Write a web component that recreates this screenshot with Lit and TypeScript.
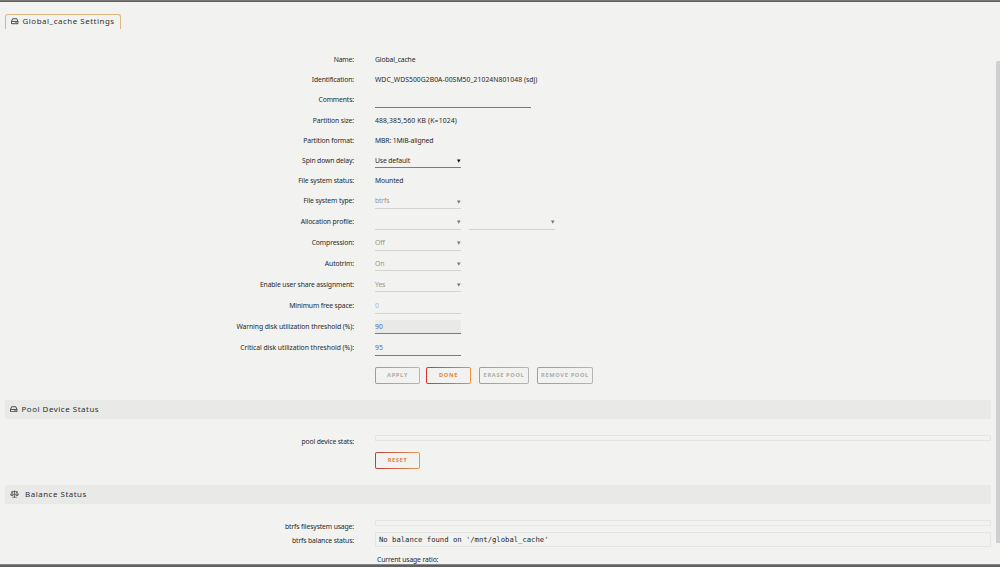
import { LitElement, html, css, svg, nothing } from "lit";
import { customElement } from "lit/decorators.js";
import { styleMap } from "lit/directives/style-map.js";

type Kind = "text" | "select" | "input" | "comment";
interface Row {
  label: string;
  value: string;
  kind: Kind;
  height: number;
  disabled?: boolean;
  focused?: boolean;
  second?: boolean;
  tone?: string;
}

const rows: Row[] = [
  { label: "Name:", value: "Global_cache", kind: "text", height: 20 },
  { label: "Identification:", value: "WDC_WDS500G2B0A-00SM50_21024N801048 (sdj)", kind: "text", height: 20, tone: "serial" },
  { label: "Comments:", value: "", kind: "comment", height: 21 },
  { label: "Partition size:", value: "488,385,560 KB (K=1024)", kind: "text", height: 20, tone: "digits" },
  { label: "Partition format:", value: "MBR: 1MiB-aligned", kind: "text", height: 20 },
  { label: "Spin down delay:", value: "Use default", kind: "select", height: 20.8 },
  { label: "File system status:", value: "Mounted", kind: "text", height: 20 },
  { label: "File system type:", value: "btrfs", kind: "select", height: 20.7, disabled: true },
  { label: "Allocation profile:", value: "", kind: "select", height: 20.7, disabled: true, second: true },
  { label: "Compression:", value: "Off", kind: "select", height: 20.8, disabled: true },
  { label: "Autotrim:", value: "On", kind: "select", height: 21, disabled: true },
  { label: "Enable user share assignment:", value: "Yes", kind: "select", height: 21.1, disabled: true },
  { label: "Minimum free space:", value: "0", kind: "input", height: 20.9, disabled: true },
  { label: "Warning disk utilization threshold (%):", value: "90", kind: "input", height: 21.5, focused: true, tone: "warning" },
  { label: "Critical disk utilization threshold (%):", value: "95", kind: "input", height: 20.5, tone: "critical" },
];

const buttons = [
  { text: "APPLY", width: 45, gap: 6 },
  { text: "DONE", width: 45, gap: 8, active: true },
  { text: "ERASE POOL", width: 50, gap: 8 },
  { text: "REMOVE POOL", width: 56, gap: 0 },
];

const driveIcon = svg`<svg class="drive" viewBox="0 0 14 12"><path d="M1 6.2 3.2 1.3h7.6L13 6.2v4.4H1zM1.2 6.4h11.6M7.6 8.5h1M10 8.5h1" fill="none" stroke="currentColor" stroke-width="1.5" stroke-linejoin="round"/></svg>`;
const scaleIcon = svg`<svg class="scale" viewBox="0 0 18 16"><path d="M9 1v13M4.5 14.5h9M3 3.2h12M4 3.5 1.2 9.5h5.6zM14 3.5l-2.8 6h5.6zM1.2 9.8c.6 2 5 2 5.6 0M11.2 9.8c.6 2 5 2 5.6 0" fill="none" stroke="currentColor" stroke-width="1.2" stroke-linejoin="round"/></svg>`;

@customElement("app-root")
export class AppRoot extends LitElement {
  static styles = css`
    :host {
      display: block;
      position: relative;
      box-sizing: border-box;
      width: 1000px;
      height: 567px;
      overflow: hidden;
      background: #f2f2f0;
      color: #25292a;
      font: 6.8px/14px "Noto Sans", "Open Sans", sans-serif;
      letter-spacing: -0.13px;
      white-space: nowrap;
    }
    * { box-sizing: border-box; }
    .topbar { height: 2px; background: #777774; border-bottom: 1px solid #60605e; }
    .bottombar { position: absolute; left: 0; right: 0; bottom: 0; height: 3px; background: #626262; border-top: 1px solid #858585; }
    .scroll { position: absolute; right: 0; top: 60.5px; width: 4px; height: 482.5px; background: #cfcfcf; border-radius: 2px 0 0 0; }
    .page { padding: 12px 9px 0 5px; }
    .tab {
      width: 115.5px;
      height: 15px;
      border: 1px solid #dcb881;
      border-bottom: 0;
      border-radius: 3px 3px 0 0;
      padding: 0 0 1px 5px;
      display: flex;
      align-items: center;
    }
    .title { font-size: 7.9px; letter-spacing: 0.54px; color: #2b3031; margin-top: -1px; }
    .drive { width: 7.5px; height: 6.5px; margin-right: 4px; flex: none; }
    .scale { width: 9px; height: 8px; margin-right: 6px; flex: none; }
    .form { margin-top: 23.7px; }
    .row { display: grid; grid-template-columns: 349px 1fr; column-gap: 21px; align-items: start; }
    .label { text-align: right; }
    .warning .label { letter-spacing: -0.08px; }
    .critical .label { letter-spacing: -0.04px; }
    .serial .text { letter-spacing: 0.05px; }
    .digits .text { letter-spacing: 0.15px; }
    .controls { display: flex; gap: 8px; }
    .control {
      width: 86px;
      height: 14.8px;
      border-bottom: 1px solid #7c7c7b;
      display: flex;
      justify-content: space-between;
      line-height: 14px;
    }
    .comment { width: 156px; height: 15px; border-bottom: 1px solid #7a7a79; }
    .arrow { width: 3.6px; height: 4px; margin-top: 5.2px; fill: #111; }
    .disabled { color: #929494; border-bottom-color: #d3d3d2; }
    .disabled .arrow { fill: #777; }
    .input { color: #486dba; letter-spacing: 0.15px; }
    .input.disabled { color: #a9b5ed; }
    .focused { background: #e9e9e8; }
    .buttons { display: flex; margin-left: 370px; height: 17px; }
    .form + .buttons { margin-top: 5.3px; }
    .button {
      height: 17px;
      padding: 1px;
      border-radius: 2px;
      background: linear-gradient(90deg, #9c9c9b, #b5b5b4);
      color: #adadab;
      font-size: 5.7px;
      font-weight: 700;
      letter-spacing: 0.64px;
      line-height: 15px;
      text-align: center;
    }
    .face { display: block; height: 100%; background: #f2f2f0; border-radius: 1px; }
    .active { background: linear-gradient(90deg, #dc2f33, #f39338); color: #e58340; }
    .reset { background: linear-gradient(90deg, #bf3b3f, #e09a54); }
    .band {
      height: 19px;
      background: #e9e9e7;
      display: flex;
      align-items: center;
      padding: 0 0 0 5px;
    }
    .pool { margin-top: 15.7px; }
    .stats { height: 33px; padding-top: 16px; }
    .output { height: 6px; border: 1px solid #e5e5e4; }
    .balance { margin-top: 16px; }
    .usage { padding-top: 16px; height: 28px; }
    .status { height: 15px; font: 7.22px/14px "DejaVu Sans Mono", monospace; letter-spacing: 0; padding-left: 3px; }
    .statusrow { height: 21px; }
    .statusrow .label { padding-top: 2px; }
    .ratio { padding: 0.6px 0 0 372px; }
  `;

  private select(value: string, disabled = false) {
    return html`<div class="control ${disabled ? "disabled" : ""}">
      <span>${value}</span>
      <svg class="arrow" viewBox="0 0 4 4"><path d="M0 .2h4L2 4z" /></svg>
    </div>`;
  }

  private control(r: Row) {
    if (r.kind === "text") return html`<span class="text">${r.value}</span>`;
    if (r.kind === "comment") return html`<div class="comment"></div>`;
    if (r.kind === "select")
      return html`${this.select(r.value, r.disabled)}${r.second ? this.select("", true) : nothing}`;
    return html`<div class="control input ${r.disabled ? "disabled" : ""} ${r.focused ? "focused" : ""}">
      <span>${r.value}</span>
    </div>`;
  }

  render() {
    return html`
      <div class="topbar"></div>
      <main class="page">
        <div class="tab">${driveIcon}<span class="title">Global_cache Settings</span></div>
        <div class="form">
          ${rows.map(
            (r) => html`<div class="row ${r.tone ?? ""}" style=${styleMap({ height: `${r.height}px` })}>
              <span class="label">${r.label}</span>
              <div class="controls">${this.control(r)}</div>
            </div>`
          )}
        </div>
        <div class="buttons">
          ${buttons.map(
            (b) => html`<div
              class="button ${b.active ? "active" : ""}"
              style=${styleMap({ width: `${b.width}px`, marginRight: `${b.gap}px` })}
            ><span class="face">${b.text}</span></div>`
          )}
        </div>
        <div class="band pool">${driveIcon}<span class="title">Pool Device Status</span></div>
        <div class="row stats"><span class="label">pool device stats:</span><div class="output"></div></div>
        <div class="buttons">
          <div class="button active reset" style=${styleMap({ width: "45px" })}><span class="face">RESET</span></div>
        </div>
        <div class="band balance">${scaleIcon}<span class="title">Balance Status</span></div>
        <div class="row usage"><span class="label">btrfs filesystem usage:</span><div class="output"></div></div>
        <div class="row statusrow">
          <span class="label">btrfs balance status:</span>
          <div class="output status">No balance found on '/mnt/global_cache'</div>
        </div>
        <div class="ratio">Current usage ratio:</div>
      </main>
      <div class="scroll"></div>
      <div class="bottombar"></div>
    `;
  }
}
